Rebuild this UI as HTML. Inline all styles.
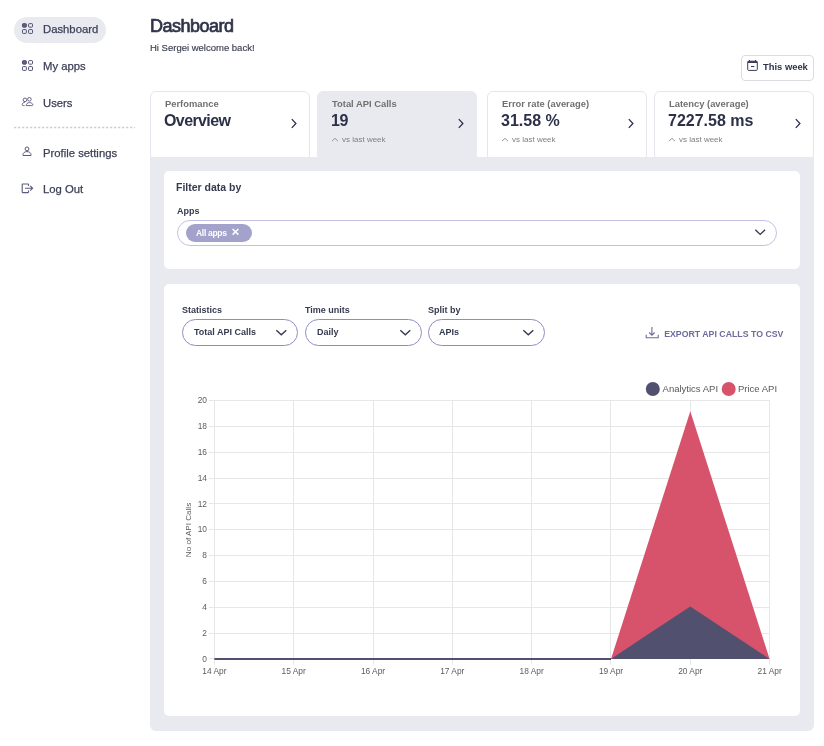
<!DOCTYPE html>
<html><head><meta charset="utf-8">
<style>
*{box-sizing:border-box;margin:0;padding:0}
html,body{width:824px;height:746px;overflow:hidden;background:#fff}
body{position:relative;font-family:"Liberation Sans",sans-serif;color:#3a3d55}
.a{position:absolute;white-space:nowrap;line-height:1;will-change:transform}
.pill{left:14px;top:17px;width:92px;height:26px;border-radius:13px;background:#e9eaf0}
.nav{font-size:11.3px;color:#3d4058;left:43px;-webkit-text-stroke:0.25px #3d4058}
.title{left:150px;font-size:18px;font-weight:normal;color:#2f3349;-webkit-text-stroke:0.7px #2f3349;letter-spacing:-0.5px}
.sub{left:150px;font-size:9.5px;color:#3a3d50;-webkit-text-stroke:0.15px #3a3d50}
.btn{left:741px;top:55px;width:73px;height:25.5px;border:1px solid #dcdce3;border-radius:4px;background:#fff}
.card{top:91px;width:160px;height:70px;border:1px solid #e5e6ed;border-radius:6px;background:#fff}
.card.act{background:#e9eaf0;border-color:#e9eaf0}
.lbl{font-size:9.4px;font-weight:bold;color:#707070}
.val{font-size:16px;font-weight:bold;color:#2c3149}
.vs{font-size:8px;color:#7f7f7f}
.panel{left:150px;top:157px;width:664px;height:574px;background:#e9eaf0;border-radius:0 0 6px 6px}
.wcard{left:164px;width:636px;background:#fff;border-radius:5px}
.sel{border-radius:14px;background:#fff}
</style></head><body>
<div class="a pill"></div>
<svg class="a" style="left:21px;top:22px" width="13" height="13" viewBox="0 0 13 13"><g stroke="#4d4d6e" stroke-width="1"><rect x="1.5" y="1.65" width="3.85" height="3.5" rx="0.7" fill="#62627f"/><rect x="7.6" y="1.65" width="3.9" height="3.5" rx="0.7" fill="none"/><rect x="1.5" y="7.6" width="3.85" height="3.8" rx="0.7" fill="none"/><rect x="7.6" y="7.6" width="3.9" height="3.8" rx="0.7" fill="none"/></g></svg>
<div class="a nav" style="top:23.73px">Dashboard</div>
<svg class="a" style="left:21px;top:59px" width="13" height="13" viewBox="0 0 13 13"><g stroke="#4d4d6e" stroke-width="1"><rect x="1.5" y="1.65" width="3.85" height="3.5" rx="0.7" fill="#62627f"/><rect x="7.6" y="1.65" width="3.9" height="3.5" rx="0.7" fill="none"/><rect x="1.5" y="7.6" width="3.85" height="3.8" rx="0.7" fill="none"/><rect x="7.6" y="7.6" width="3.9" height="3.8" rx="0.7" fill="none"/></g></svg>
<div class="a nav" style="top:60.73px">My apps</div>
<svg class="a" style="left:21px;top:96px" width="13" height="11" viewBox="0 0 13 11">
  <g fill="none" stroke="#5f5f80" stroke-width="0.95">
    <circle cx="4" cy="3.9" r="1.8"/><circle cx="8.4" cy="3.3" r="1.8"/>
    <path d="M4 6.1 C2.2 6.5 1.2 7.5 1.2 8.6 Q1.2 9.6 2.2 9.6 H3.6"/>
    <path d="M5.2 9.6 C5.2 7.7 6.6 6.6 8.4 6.6 C10.3 6.6 11.8 7.7 11.8 8.6 Q11.8 9.6 10.8 9.6 Z"/>
  </g></svg>
<div class="a nav" style="top:97.73px">Users</div>
<svg class="a" style="left:14px;top:126.2px" width="122" height="3" viewBox="0 0 122 3"><line x1="0" y1="1.5" x2="121" y2="1.5" stroke="#cdced6" stroke-width="1.5" stroke-dasharray="2.3 1.7"/></svg>
<svg class="a" style="left:22px;top:146px" width="10" height="11" viewBox="0 0 10 11">
  <g fill="none" stroke="#5a5a7a" stroke-width="1">
    <circle cx="5" cy="2.9" r="1.9"/>
    <path d="M5 5.6 C2.6 5.6 1 6.9 1 8.6 V9.5 H9 V8.6 C9 6.9 7.4 5.6 5 5.6 Z"/>
  </g></svg>
<div class="a nav" style="top:147.63px">Profile settings</div>
<svg class="a" style="left:21px;top:183px" width="13" height="11" viewBox="0 0 13 11">
  <g fill="none" stroke="#5a5a7a" stroke-width="1.1">
    <path d="M7.5 3 V1.6 Q7.5 1 6.9 1 H1.8 Q1.2 1 1.2 1.6 V9 Q1.2 9.6 1.8 9.6 H6.9 Q7.5 9.6 7.5 9 V7.6"/>
    <path d="M4 5.3 H11.6 M9.2 2.9 L11.6 5.3 L9.2 7.7"/>
  </g></svg>
<div class="a nav" style="top:183.53px">Log Out</div>
<div class="a title" style="top:17.4px">Dashboard</div>
<div class="a sub" style="top:43.2px">Hi Sergei welcome back!</div>
<div class="a btn"></div>
<svg class="a" style="left:746px;top:59px" width="13" height="13" viewBox="0 0 13 13">
  <g fill="none" stroke="#3a3d55" stroke-width="1">
    <rect x="1.7" y="2.2" width="9.6" height="9.2" rx="1"/>
    <path d="M1.7 3.1 H11.3" stroke-width="1.8"/>
    <path d="M3.5 1 V2.5 M9.5 1 V2.5" stroke-width="1"/>
    <path d="M5 7.5 H8.3" stroke-width="1.1"/>
  </g></svg>
<div class="a" style="left:763px;top:61.5px;font-size:9.4px;font-weight:bold;color:#2f3349">This week</div>
<div class="a card" style="left:150px"></div>
<div class="a card act" style="left:317px"></div>
<div class="a card" style="left:487px"></div>
<div class="a card" style="left:654px"></div>
<div class="a panel"></div>
<div class="a lbl" style="left:164.5px;top:98.8px">Perfomance</div>
<div class="a val" style="left:164px;top:113px;letter-spacing:-0.6px">Overview</div>
<svg class="a" style="left:289.5px;top:117.5px" width="8" height="11" viewBox="0 0 8 11"><path d="M1.8 1.1 L5.9 5.5 L1.8 9.9" fill="none" stroke="#2c3149" stroke-width="1.3"/></svg>
<div class="a lbl" style="left:331.5px;top:98.8px">Total API Calls</div>
<div class="a val" style="left:331px;top:113px;letter-spacing:-0.3px">19</div>
<svg class="a" style="left:331px;top:136.5px" width="8" height="5" viewBox="0 0 8 5"><path d="M1 4.2 L4 1.3 L7 4.2" fill="none" stroke="#8a8a8a" stroke-width="0.9"/></svg>
<div class="a vs" style="left:342px;top:136px">vs last week</div>
<svg class="a" style="left:456.5px;top:117.5px" width="8" height="11" viewBox="0 0 8 11"><path d="M1.8 1.1 L5.9 5.5 L1.8 9.9" fill="none" stroke="#2c3149" stroke-width="1.3"/></svg>
<div class="a lbl" style="left:501.5px;top:98.8px">Error rate (average)</div>
<div class="a val" style="left:501px;top:113px;letter-spacing:0px">31.58 %</div>
<svg class="a" style="left:501px;top:136.5px" width="8" height="5" viewBox="0 0 8 5"><path d="M1 4.2 L4 1.3 L7 4.2" fill="none" stroke="#8a8a8a" stroke-width="0.9"/></svg>
<div class="a vs" style="left:512px;top:136px">vs last week</div>
<svg class="a" style="left:626.5px;top:117.5px" width="8" height="11" viewBox="0 0 8 11"><path d="M1.8 1.1 L5.9 5.5 L1.8 9.9" fill="none" stroke="#2c3149" stroke-width="1.3"/></svg>
<div class="a lbl" style="left:668.5px;top:98.8px">Latency (average)</div>
<div class="a val" style="left:668px;top:113px;letter-spacing:0px">7227.58 ms</div>
<svg class="a" style="left:668px;top:136.5px" width="8" height="5" viewBox="0 0 8 5"><path d="M1 4.2 L4 1.3 L7 4.2" fill="none" stroke="#8a8a8a" stroke-width="0.9"/></svg>
<div class="a vs" style="left:679px;top:136px">vs last week</div>
<svg class="a" style="left:793.5px;top:117.5px" width="8" height="11" viewBox="0 0 8 11"><path d="M1.8 1.1 L5.9 5.5 L1.8 9.9" fill="none" stroke="#2c3149" stroke-width="1.3"/></svg>
<div class="a wcard" style="top:171px;height:98px"></div>
<div class="a" style="left:176px;top:181.9px;font-size:10.5px;font-weight:bold;color:#353a4f">Filter data by</div>
<div class="a" style="left:177px;top:206.5px;font-size:9px;font-weight:bold;color:#353a4f">Apps</div>
<div class="a sel" style="left:177px;top:220px;width:600px;height:26px;border:1px solid #c3c1e2;border-radius:13px"></div>
<div class="a" style="left:186px;top:224px;width:66px;height:18px;border-radius:9px;background:#a3a2ca"></div>
<div class="a" style="left:195.8px;top:228.6px;font-size:8.5px;font-weight:bold;color:#fff;letter-spacing:-0.3px">All apps</div>
<svg class="a" style="left:231px;top:227px" width="9" height="9" viewBox="0 0 9 9"><path d="M1.6 2 L7.4 7.6 M7.4 2 L1.6 7.6" stroke="#fff" stroke-width="1.5"/></svg>
<svg class="a" style="left:754px;top:228px" width="13" height="9" viewBox="0 0 13 9"><path d="M1.3 1.8 L6.2 6.4 L11.1 1.8" fill="none" stroke="#353a4f" stroke-width="1.4"/></svg>
<div class="a wcard" style="top:284px;height:432px"></div>
<div class="a" style="left:182px;top:306.1px;font-size:9px;font-weight:bold;color:#353a4f">Statistics</div>
<div class="a sel" style="left:182px;top:319px;width:115.8px;height:27px;border:1px solid #8f8cc3"></div>
<div class="a" style="left:193.5px;top:328px;font-size:9px;font-weight:bold;color:#353a4f">Total API Calls</div>
<svg class="a" style="left:275.2px;top:328px" width="13" height="9" viewBox="0 0 13 9"><path d="M1.3 2.2 L6.3 6.8 L11.3 2.2" fill="none" stroke="#353a4f" stroke-width="1.4"/></svg>
<div class="a" style="left:305px;top:306.1px;font-size:9px;font-weight:bold;color:#353a4f">Time units</div>
<div class="a sel" style="left:305px;top:319px;width:116.7px;height:27px;border:1px solid #8f8cc3"></div>
<div class="a" style="left:316.5px;top:328px;font-size:9px;font-weight:bold;color:#353a4f">Daily</div>
<svg class="a" style="left:399.1px;top:328px" width="13" height="9" viewBox="0 0 13 9"><path d="M1.3 2.2 L6.3 6.8 L11.3 2.2" fill="none" stroke="#353a4f" stroke-width="1.4"/></svg>
<div class="a" style="left:428px;top:306.1px;font-size:9px;font-weight:bold;color:#353a4f">Split by</div>
<div class="a sel" style="left:428px;top:319px;width:117px;height:27px;border:1px solid #8f8cc3"></div>
<div class="a" style="left:438.8px;top:328px;font-size:9px;font-weight:bold;color:#353a4f">APIs</div>
<svg class="a" style="left:522.4px;top:328px" width="13" height="9" viewBox="0 0 13 9"><path d="M1.3 2.2 L6.3 6.8 L11.3 2.2" fill="none" stroke="#353a4f" stroke-width="1.4"/></svg>
<svg class="a" style="left:644.5px;top:325.5px" width="15" height="14" viewBox="0 0 15 14"><g fill="none" stroke="#6d6b9c" stroke-width="1.1"><path d="M6.9 1 V9.2 M4.2 6.5 L6.9 9.2 L9.6 6.5"/><path d="M1.2 8.8 V11.8 H13.2 V8.8"/></g></svg>
<svg class="a" style="left:660px;top:325px" width="130" height="16" viewBox="0 0 130 16"><text x="4.2" y="12.2" font-family="Liberation Sans" font-weight="bold" font-size="9.5" fill="#6d6b9c" textLength="119.2" lengthAdjust="spacingAndGlyphs">EXPORT API CALLS TO CSV</text></svg>
<svg class="a" style="left:0;top:0" width="824" height="746" viewBox="0 0 824 746">
<g stroke="#e7e7e7" stroke-width="1">
<line x1="209" y1="658.5" x2="770.0" y2="658.5"/>
<line x1="209" y1="633.5" x2="770.0" y2="633.5"/>
<line x1="209" y1="607.5" x2="770.0" y2="607.5"/>
<line x1="209" y1="581.5" x2="770.0" y2="581.5"/>
<line x1="209" y1="555.5" x2="770.0" y2="555.5"/>
<line x1="209" y1="529.5" x2="770.0" y2="529.5"/>
<line x1="209" y1="503.5" x2="770.0" y2="503.5"/>
<line x1="209" y1="478.5" x2="770.0" y2="478.5"/>
<line x1="209" y1="452.5" x2="770.0" y2="452.5"/>
<line x1="209" y1="426.5" x2="770.0" y2="426.5"/>
<line x1="209" y1="400.5" x2="770.0" y2="400.5"/>
<line x1="214.5" y1="400.0" x2="214.5" y2="664.5"/>
<line x1="293.5" y1="400.0" x2="293.5" y2="664.5"/>
<line x1="373.5" y1="400.0" x2="373.5" y2="664.5"/>
<line x1="452.5" y1="400.0" x2="452.5" y2="664.5"/>
<line x1="531.5" y1="400.0" x2="531.5" y2="664.5"/>
<line x1="610.5" y1="400.0" x2="610.5" y2="664.5"/>
<line x1="690.5" y1="400.0" x2="690.5" y2="664.5"/>
<line x1="769.5" y1="400.0" x2="769.5" y2="664.5"/>
</g>
<polygon points="611.0,658.9 690.3,411.2 769.6,658.9" fill="#d6536b"/>
<polygon points="611.0,658.9 690.3,606.4 769.6,658.9" fill="#51516f"/>
<line x1="214.4" y1="658.9" x2="611.0" y2="658.9" stroke="#51516f" stroke-width="2"/>
<g font-family="Liberation Sans" font-size="8.4" fill="#5c5c5c" text-anchor="end">
<text x="207" y="661.5">0</text>
<text x="207" y="635.7">2</text>
<text x="207" y="609.8">4</text>
<text x="207" y="584.0">6</text>
<text x="207" y="558.2">8</text>
<text x="207" y="532.4">10</text>
<text x="207" y="506.5">12</text>
<text x="207" y="480.7">14</text>
<text x="207" y="454.9">16</text>
<text x="207" y="429.0">18</text>
<text x="207" y="403.2">20</text>
</g>
<g font-family="Liberation Sans" font-size="8.4" fill="#5c5c5c" text-anchor="middle">
<text x="214.4" y="673.9">14 Apr</text>
<text x="293.7" y="673.9">15 Apr</text>
<text x="373.0" y="673.9">16 Apr</text>
<text x="452.3" y="673.9">17 Apr</text>
<text x="531.7" y="673.9">18 Apr</text>
<text x="611.0" y="673.9">19 Apr</text>
<text x="690.3" y="673.9">20 Apr</text>
<text x="769.6" y="673.9">21 Apr</text>
</g>
<text transform="translate(191,530) rotate(-90)" font-family="Liberation Sans" font-size="8.1" fill="#5c5c5c" text-anchor="middle">No of API Calls</text>
<circle cx="652.8" cy="389" r="7" fill="#51516f"/><circle cx="728.7" cy="389" r="7" fill="#d6536b"/>
<text x="662.6" y="392.1" font-family="Liberation Sans" font-size="9.5" fill="#585858">Analytics API</text>
<text x="738" y="392.1" font-family="Liberation Sans" font-size="9.5" fill="#585858">Price API</text>
</svg>
</body></html>
